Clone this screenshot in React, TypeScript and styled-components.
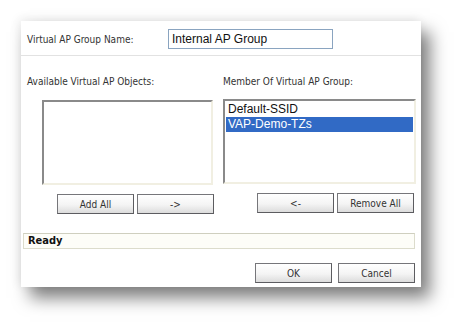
import styled, { createGlobalStyle } from 'styled-components'

const GlobalStyle = createGlobalStyle`
  html, body {
    margin: 0;
    padding: 0;
    background: #ffffff;
  }
`

const Page = styled.div`
  width: 463px;
  height: 330px;
  padding: 21px 0 0 21px;
  box-sizing: border-box;
  background: #ffffff;
  overflow: hidden;
`

const Dialog = styled.div`
  width: 400px;
  height: 266px;
  box-sizing: border-box;
  background: #ffffff;
  box-shadow: 9px 11px 16px rgba(0, 0, 0, 0.5), -2px -2px 10px rgba(0, 0, 0, 0.08);
  display: flex;
  flex-direction: column;
  font-family: 'DejaVu Sans Condensed', 'DejaVu Sans', sans-serif;
  font-stretch: condensed;
  font-size: 10px;
  color: #222;
`

const NameRow = styled.div`
  height: 35px;
  display: flex;
  align-items: center;
  padding-left: 6px;
  border-bottom: 1px solid #e2e2e2;
  box-sizing: border-box;
`

const Label = styled.span<{ $width?: number }>`
  display: inline-block;
  width: ${({ $width }) => ($width ? `${$width}px` : 'auto')};
  margin-top: 3px;
  color: #333;
`

const NameInput = styled.input`
  width: 165px;
  height: 20px;
  box-sizing: border-box;
  margin-top: 2px;
  border: 1px solid #8aa4c0;
  padding: 0 0 0 3px;
  font-family: 'Liberation Sans', Arial, sans-serif;
  font-size: 12px;
  color: #111;
  background: #fff;
  outline: none;
`

const Columns = styled.div`
  display: grid;
  grid-template-columns: 202px 198px;
  padding-top: 20px;
`

const Column = styled.div<{ $indent: number }>`
  display: flex;
  flex-direction: column;
  padding-left: ${({ $indent }) => $indent}px;
`

const ColumnLabel = styled.div`
  height: 16px;
  margin-bottom: 7px;
  color: #333;
`

const ListBox = styled.div<{ $width: number; $left: number; $top: number }>`
  width: ${({ $width }) => $width}px;
  height: 85px;
  margin-top: ${({ $top }) => $top}px;
  margin-left: ${({ $left }) => $left}px;
  box-sizing: border-box;
  border-top: 2px solid #8a8a8a;
  border-left: 2px solid #8a8a8a;
  border-right: 2px solid #f1efe2;
  border-bottom: 2px solid #f1efe2;
  background: #fff;
  padding: 1px 1px;
  font-family: 'Liberation Sans', Arial, sans-serif;
  font-size: 12px;
`

const ListItem = styled.div<{ $selected?: boolean }>`
  height: 15px;
  line-height: 15px;
  padding-left: 2px;
  color: ${({ $selected }) => ($selected ? '#ffffff' : '#111')};
  background: ${({ $selected }) => ($selected ? '#316ac5' : 'transparent')};
`

const ButtonRow = styled.div<{ $indent: number; $top: number }>`
  display: flex;
  gap: 3px;
  margin-left: ${({ $indent }) => $indent}px;
  margin-top: ${({ $top }) => $top}px;
`

const Button = styled.button`
  width: 77px;
  height: 20px;
  box-sizing: border-box;
  border: 1px solid #76767a;
  border-right-color: #5c5c60;
  border-bottom-color: #5c5c60;
  background: linear-gradient(#ffffff 0%, #f4f4f4 55%, #dcdcdc 100%);
  font-family: 'DejaVu Sans Condensed', 'DejaVu Sans', sans-serif;
  font-stretch: condensed;
  font-size: 10px;
  color: #333;
  padding: 0;
  cursor: pointer;
`

const StatusBar = styled.div`
  width: 392px;
  height: 16px;
  box-sizing: border-box;
  margin: 19px 0 0 2px;
  border: 1px solid #dcdccc;
  border-top-color: #cfcfbf;
  background: #fdfdf8;
  padding-left: 4px;
  font-family: 'DejaVu Sans Condensed', 'DejaVu Sans', sans-serif;
  font-size: 11px;
  font-weight: bold;
  line-height: 14px;
  color: #111;
`

const Footer = styled.div`
  display: flex;
  justify-content: flex-end;
  gap: 6px;
  padding-right: 6px;
  margin-top: 14px;
`

export default function App() {
  return (
    <>
      <GlobalStyle />
      <Page>
        <Dialog>
          <NameRow>
            <Label $width={141}>Virtual AP Group Name:</Label>
            <NameInput defaultValue="Internal AP Group" />
          </NameRow>
          <Columns>
            <Column $indent={6}>
              <ColumnLabel>Available Virtual AP Objects:</ColumnLabel>
              <ListBox $width={171} $left={15} $top={1} />
              <ButtonRow $indent={30} $top={9}>
                <Button>Add All</Button>
                <Button>-&gt;</Button>
              </ButtonRow>
            </Column>
            <Column $indent={0}>
              <ColumnLabel>Member Of Virtual AP Group:</ColumnLabel>
              <ListBox $width={193} $left={0} $top={0}>
                <ListItem>Default-SSID</ListItem>
                <ListItem $selected>VAP-Demo-TZs</ListItem>
              </ListBox>
              <ButtonRow $indent={34} $top={9}>
                <Button>&lt;-</Button>
                <Button>Remove All</Button>
              </ButtonRow>
            </Column>
          </Columns>
          <StatusBar>Ready</StatusBar>
          <Footer>
            <Button>OK</Button>
            <Button>Cancel</Button>
          </Footer>
        </Dialog>
      </Page>
    </>
  )
}
